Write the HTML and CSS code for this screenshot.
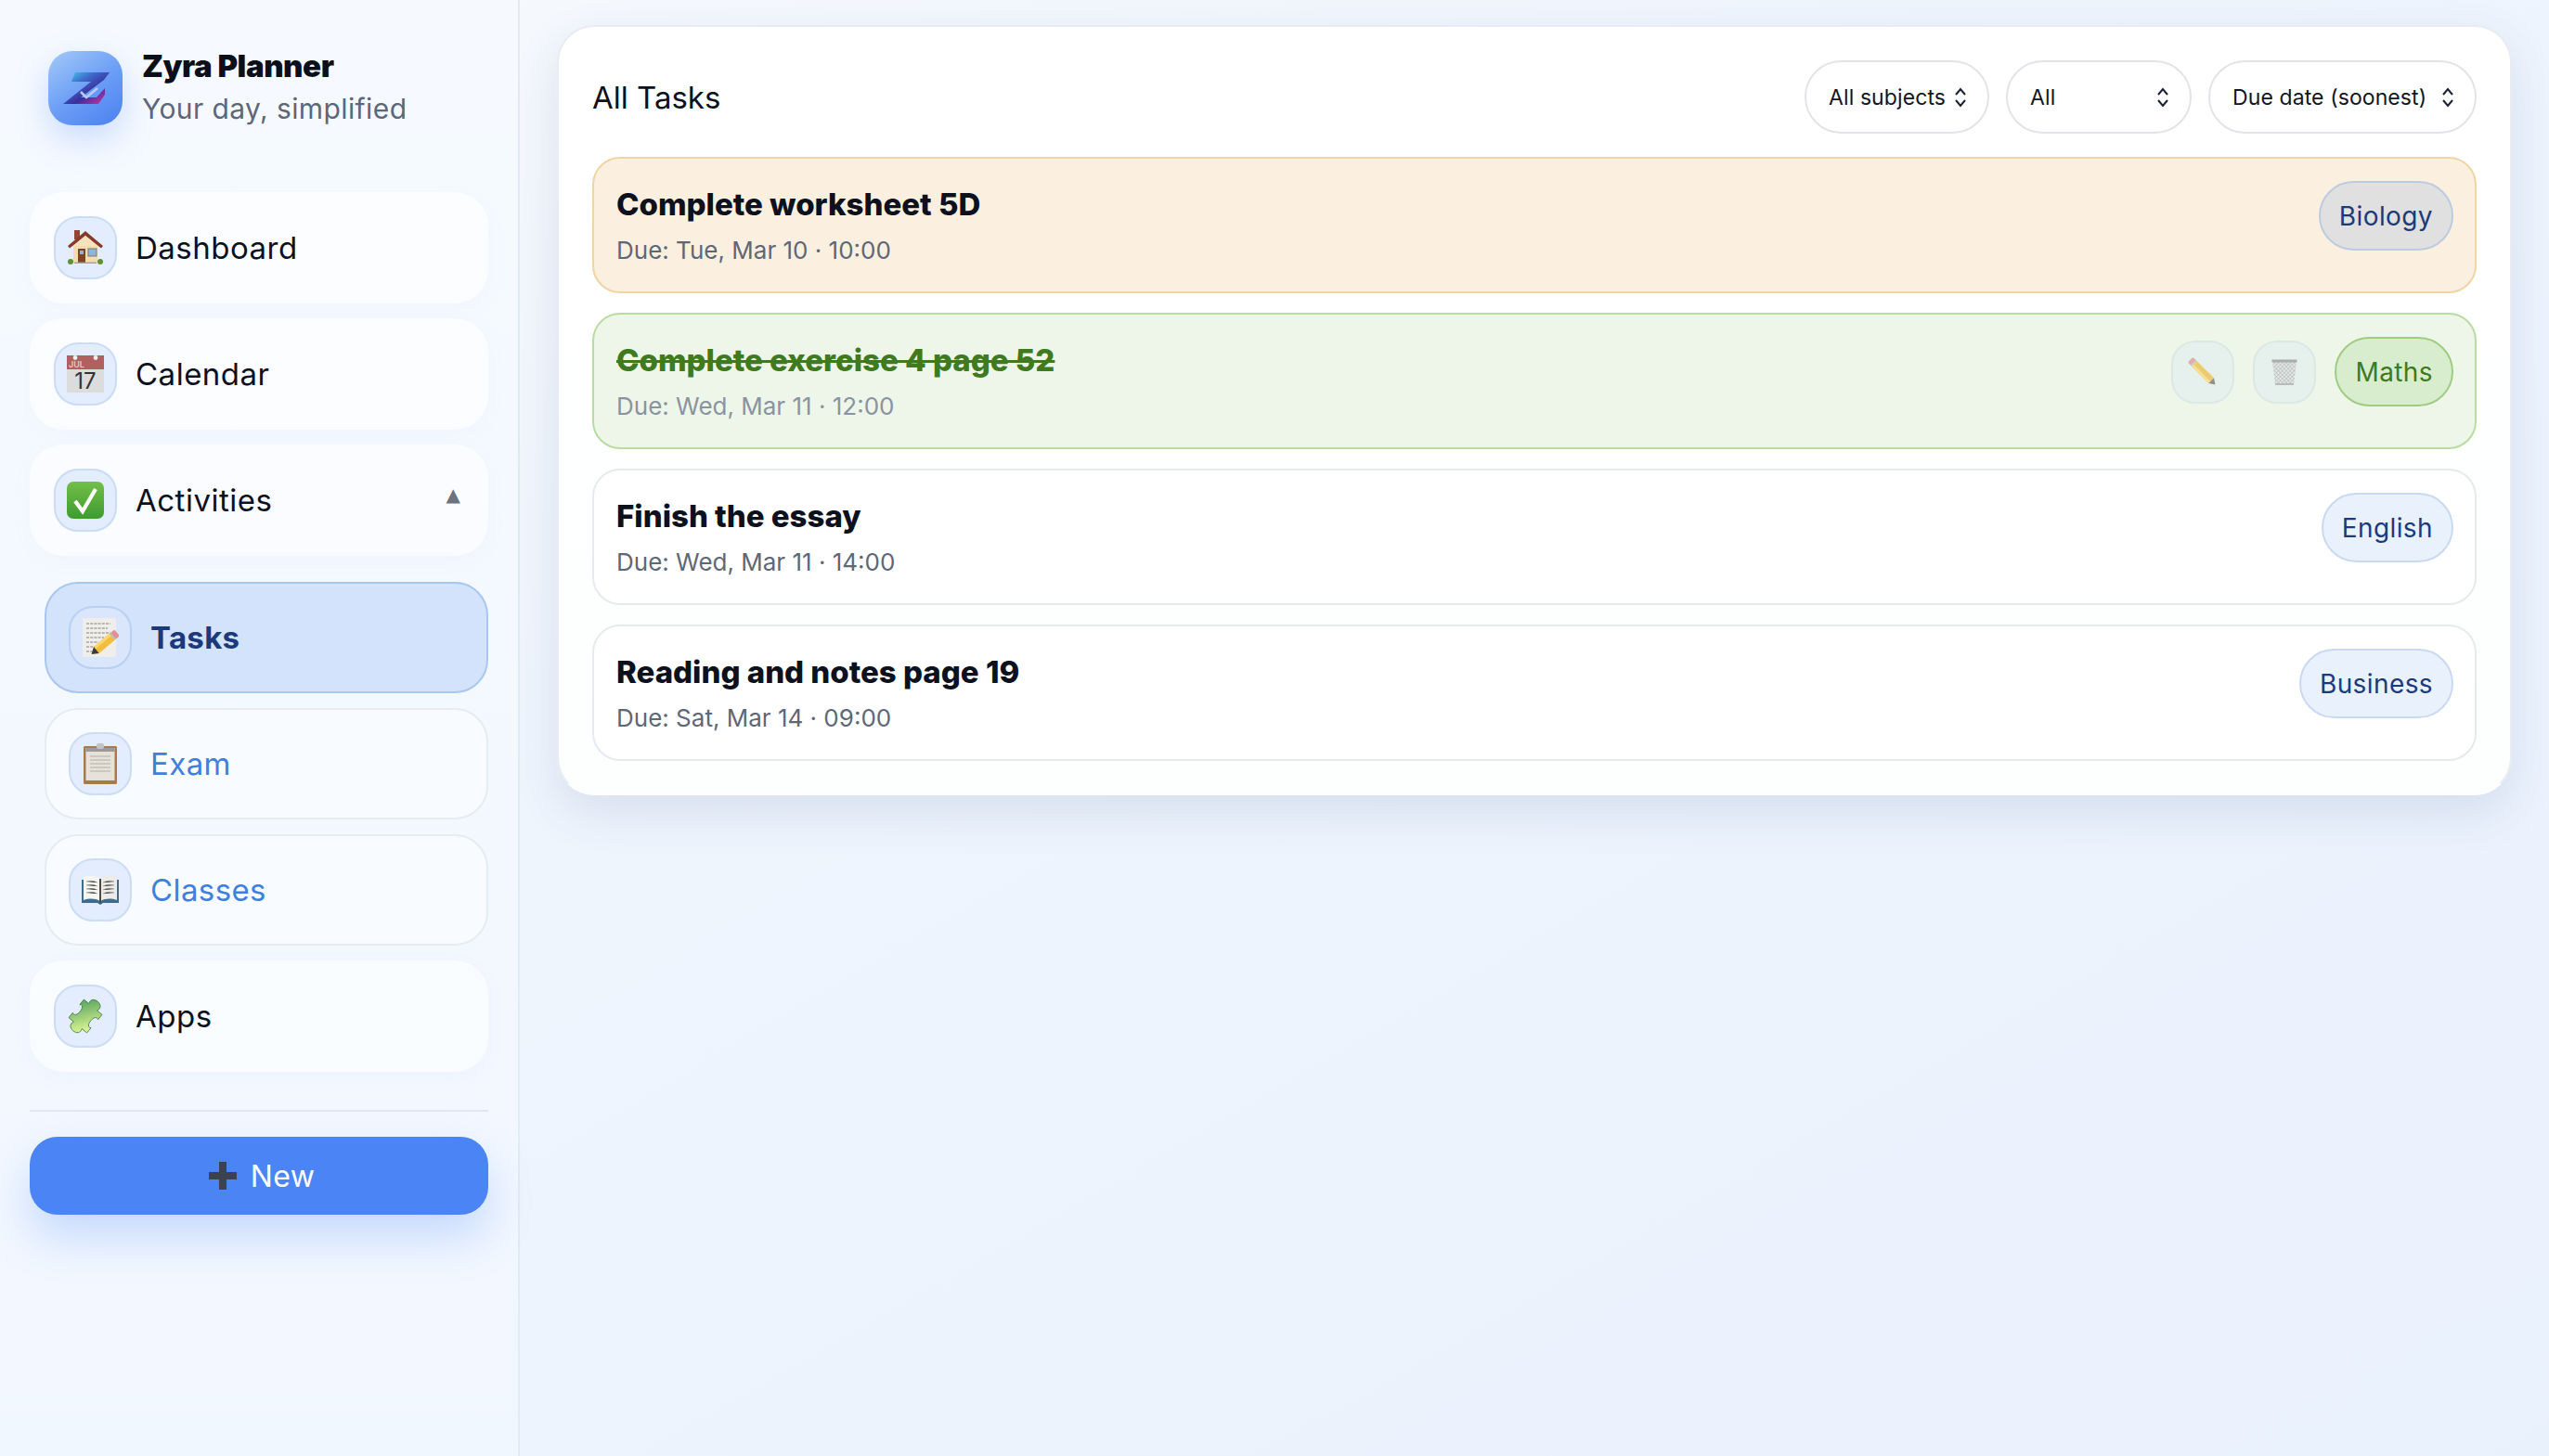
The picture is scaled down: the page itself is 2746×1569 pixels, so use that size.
FILE: index.html
```html
<!DOCTYPE html>
<html lang="en">
<head>
<meta charset="utf-8">
<title>Zyra Planner</title>
<link rel="stylesheet" href="styles.css">
</head>
<body>
<div class="app">
<aside class="sidebar">
  <div class="brand">
    <div class="logo">
      <svg viewBox="0 0 80 80" width="80" height="80">
        <defs>
          <linearGradient id="zg" x1="0.1" y1="0" x2="0.95" y2="0.9">
            <stop offset="0" stop-color="#3fd0ea"/><stop offset="0.3" stop-color="#3f6fd0"/><stop offset="0.65" stop-color="#3a2f9c"/><stop offset="1" stop-color="#c2359f"/>
          </linearGradient>
        </defs>
        <path d="M25 33 L29 23 H66 L60 31 L35 50 H52 L61 40 V47 L54 57 H16 L46 33 Z" fill="url(#zg)"/>
        <path d="M35 44 L41 50 L53 40" fill="none" stroke="#b9c9f6" stroke-width="2.6"/>
      </svg>
    </div>
    <div class="brand-text">
      <div class="brand-name">Zyra Planner</div>
      <div class="brand-sub">Your day, simplified</div>
    </div>
  </div>

  <nav class="nav">
    <a class="nav-item">
      <span class="nav-icon">
        <svg viewBox="0 0 40 40" width="40" height="40">
          <rect x="8" y="1" width="6" height="10" fill="#8f4638"/>
          <rect x="7" y="14" width="26" height="22" fill="#f4dcae"/>
          <path d="M20 2 L39 18 L37 20.500 L20 7 L3 20.500 L1 18 Z" fill="#8a3a2a"/>
          <path d="M20 7 L33 18 H7 Z" fill="#f7e3bb"/>
          <rect x="12" y="21" width="8" height="15" fill="#7b4526"/>
          <rect x="14" y="23" width="4" height="4" fill="#8fb6d6"/>
          <rect x="23" y="21" width="9" height="8" fill="#8fb6d6" stroke="#6f7c88"/>
          <rect x="8" y="35.5" width="24" height="1.5" fill="#a8a39a"/>
          <circle cx="4" cy="35" r="3" fill="#5d9133"/>
          <circle cx="36" cy="35" r="3" fill="#5d9133"/>
        </svg>
      </span>
      <span class="nav-label">Dashboard</span>
    </a>
    <a class="nav-item">
      <span class="nav-icon">
        <svg viewBox="0 0 40 40" width="40" height="40">
          <rect y="0" width="40" height="40" fill="#dcdcdc"/>
          <rect y="0" width="40" height="15" fill="#b25f5f"/>
          <circle cx="9" cy="2.5" r="2.4" fill="#f5f0f0"/>
          <circle cx="31" cy="2.5" r="2.4" fill="#f5f0f0"/>
          <text x="2" y="12.5" class="cal-month">JUL</text>
          <text x="20" y="36" text-anchor="middle" class="cal-day">17</text>
        </svg>
      </span>
      <span class="nav-label">Calendar</span>
    </a>
    <a class="nav-item">
      <span class="nav-icon">
        <svg viewBox="0 0 40 40" width="40" height="40">
          <defs>
            <linearGradient id="cg" x1="0" y1="0" x2="0" y2="1"><stop offset="0" stop-color="#72bf49"/><stop offset="1" stop-color="#3e9b2e"/></linearGradient>
          </defs>
          <rect width="40" height="40" rx="7" fill="url(#cg)"/>
          <path d="M9 21 L17 32 L31 8" fill="none" stroke="#fff" stroke-width="4.2"/>
        </svg>
      </span>
      <span class="nav-label">Activities</span>
      <span class="caret">▲</span>
    </a>

    <div class="subnav">
      <a class="sub-item active">
        <span class="nav-icon">
          <svg viewBox="0 0 40 42" width="40" height="42">
            <rect x="1" y="0" width="36" height="42" fill="#f0eeea"/>
            <g stroke="#67645f" stroke-width="0.8" stroke-dasharray="3 1.2">
              <path d="M5 6 H31 M5 11 H28 M5 16 H31 M5 21 H24 M5 26 H18 M5 31 H14 M5 36 H12"/>
            </g>
            <g transform="rotate(50 24 27)">
              <rect x="20" y="16" width="9" height="22" fill="#f2bc3d"/>
              <rect x="20" y="16" width="3" height="22" fill="#f9d86e"/>
              <rect x="20" y="13" width="9" height="3" fill="#b9b9b9"/>
              <rect x="20" y="9" width="9" height="5" rx="2" fill="#e58f8f"/>
              <path d="M20 38 H29 L24.500 45 Z" fill="#3c3a38"/>
            </g>
          </svg>
        </span>
        <span class="sub-label">Tasks</span>
      </a>
      <a class="sub-item">
        <span class="nav-icon">
          <svg viewBox="0 0 40 44" width="40" height="44">
            <rect x="2" y="3" width="36" height="41" rx="1.5" fill="#a87b4a"/>
            <rect x="4.5" y="5" width="31" height="35" fill="#e6e2da"/>
            <rect x="4.5" y="5" width="31" height="4" fill="#9a9a9a"/>
            <rect x="16" y="0" width="8" height="6" rx="2" fill="#c3c3c3"/>
            <g stroke="#c4c0b8" stroke-width="1.6"><path d="M9 14 H31 M9 18 H31 M9 22 H31 M9 26 H31 M9 30 H31"/></g>
          </svg>
        </span>
        <span class="sub-label">Exam</span>
      </a>
      <a class="sub-item">
        <span class="nav-icon">
          <svg viewBox="0 0 40 32" width="40" height="32">
            <path d="M0 5 H40 V30 H23 L20 32 L17 30 H0 Z" fill="#3f6c8c"/>
            <path d="M2 2 C8 0 15 0 19.5 4 V28 C15 25 8 25 2 27 Z" fill="#f5f5f2"/>
            <path d="M38 2 C32 0 25 0 20.5 4 V28 C25 25 32 25 38 27 Z" fill="#ecebe7"/>
            <g stroke="#9c9c98" stroke-width="0.8"><path d="M5 7 C9 6 13 6 17 8 M5 11 C9 10 13 10 17 12 M5 15 C9 14 13 14 17 16 M5 19 C9 18 13 18 17 20 M35 7 C31 6 27 6 23 8 M35 11 C31 10 27 10 23 12 M35 15 C31 14 27 14 23 16 M35 19 C31 18 27 18 23 20"/></g>
            <rect x="19" y="4" width="2" height="26" fill="#4d4a46"/>
          </svg>
        </span>
        <span class="sub-label">Classes</span>
      </a>
    </div>

    <a class="nav-item">
      <span class="nav-icon">
        <svg viewBox="0 0 40 40" width="40" height="40">
          <defs>
            <linearGradient id="pg" x1="0.18" y1="0.11" x2="0.82" y2="0.89"><stop offset="0" stop-color="#5fa862"/><stop offset="1" stop-color="#dcf692"/></linearGradient>
          </defs>
          <path transform="translate(20 20) rotate(40) scale(1.16)" d="M-11 -11 H-5 C-9 -20 9 -20 5 -11 H11 V-5 C5 -9 5 9 11 5 V11 H5 C9 20 -9 20 -5 11 H-11 V5 C-5 9 -5 -9 -11 -5 Z" fill="url(#pg)" stroke="#4a7a4a" stroke-width="0.7"/>
        </svg>
      </span>
      <span class="nav-label">Apps</span>
    </a>
  </nav>

  <hr class="divider">

  <button class="new-btn">
    <svg viewBox="0 0 30 30" width="30" height="30"><path d="M11 0 H19 V11 H30 V19 H19 V30 H11 V19 H0 V11 H11 Z" fill="#3c4250"/></svg>
    <span>New</span>
  </button>
</aside>

<main class="main">
  <section class="panel">
    <header class="panel-head">
      <h1 class="panel-title">All Tasks</h1>
      <div class="filters">
        <div class="select sel-subjects"><span>All subjects</span><svg class="chev" viewBox="0 0 14 24" width="14" height="24"><path d="M2 9 L7 3 L12 9 M2 15 L7 21 L12 15" fill="none" stroke="#1a2030" stroke-width="2"/></svg></div>
        <div class="select sel-all"><span>All</span><svg class="chev" viewBox="0 0 14 24" width="14" height="24"><path d="M2 9 L7 3 L12 9 M2 15 L7 21 L12 15" fill="none" stroke="#1a2030" stroke-width="2"/></svg></div>
        <div class="select sel-due"><span>Due date (soonest)</span><svg class="chev" viewBox="0 0 14 24" width="14" height="24"><path d="M2 9 L7 3 L12 9 M2 15 L7 21 L12 15" fill="none" stroke="#1a2030" stroke-width="2"/></svg></div>
      </div>
    </header>

    <div class="tasks">
      <article class="task task-soon">
        <div class="task-text">
          <div class="task-title">Complete worksheet 5D</div>
          <div class="task-due">Due: Tue, Mar 10 · 10:00</div>
        </div>
        <div class="task-side"><span class="pill pill-gray">Biology</span></div>
      </article>

      <article class="task task-done">
        <div class="task-text">
          <div class="task-title">Complete exercise 4 page 52</div>
          <div class="task-due">Due: Wed, Mar 11 · 12:00</div>
        </div>
        <div class="task-side">
          <span class="icon-btn">
            <svg viewBox="0 0 30 30" width="30" height="30">
              <g transform="rotate(-45 15 15)" opacity="0.72">
                <rect x="11" y="-4" width="8" height="5" rx="2" fill="#e58f8f"/>
                <rect x="11" y="0" width="8" height="2" fill="#bbb"/>
                <rect x="11" y="2" width="8" height="26" fill="#f2bc3d"/>
                <rect x="11" y="2" width="3" height="26" fill="#f9d86e"/>
                <path d="M11 28 H19 L15 34 Z" fill="#6d6a62"/>
              </g>
            </svg>
          </span>
          <span class="icon-btn">
            <svg viewBox="0 0 30 30" width="30" height="30">
              <defs>
                <pattern id="mesh" width="3" height="3" patternUnits="userSpaceOnUse" patternTransform="rotate(45)">
                  <rect width="3" height="3" fill="#e3e7e6"/>
                  <path d="M0 0 H3 M0 0 V3" stroke="#a0a5a4" stroke-width="0.8"/>
                </pattern>
              </defs>
              <path d="M2 3 H28 L25 29 H5 Z" fill="url(#mesh)"/>
              <rect x="1.5" y="1.5" width="27" height="3" fill="#a9adac"/>
              <rect x="5" y="27" width="20" height="2" fill="#b7bbba"/>
            </svg>
          </span>
          <span class="pill pill-green">Maths</span>
        </div>
      </article>

      <article class="task">
        <div class="task-text">
          <div class="task-title">Finish the essay</div>
          <div class="task-due">Due: Wed, Mar 11 · 14:00</div>
        </div>
        <div class="task-side"><span class="pill">English</span></div>
      </article>

      <article class="task">
        <div class="task-text">
          <div class="task-title">Reading and notes page 19</div>
          <div class="task-due">Due: Sat, Mar 14 · 09:00</div>
        </div>
        <div class="task-side"><span class="pill">Business</span></div>
      </article>
    </div>
  </section>
</main>
</div>
</body>
</html>
```
FILE: styles.css
```css
* { box-sizing: border-box; }
html, body { margin: 0; height: 100%; }
body {
  font-family: Inter, "Noto Sans", "Liberation Sans", sans-serif;
  color: #0c111d;
  background: linear-gradient(150deg, #f8fafd 0%, #eff5fd 35%, #e9f1fd 100%);
  overflow: hidden;
}
.app { display: grid; grid-template-columns: 560px 1fr; height: 1569px; }

/* Sidebar */
.sidebar {
  padding: 55px 32px 0;
  background: linear-gradient(180deg, #f6faff 0%, #f1f7ff 100%);
  border-right: 2px solid #e2eaf5;
}
.brand { display: flex; gap: 21px; align-items: flex-start; }
.logo {
  width: 80px; height: 80px; flex: none; border-radius: 26px;
  margin-left: 20px;
  background: linear-gradient(145deg, #a4caf9 0%, #6d9ff6 50%, #4a80f0 100%);
  box-shadow: 0 14px 36px rgba(74, 132, 245, 0.26);
}
.logo svg { display: block; }
.brand-text { margin-top: -2px; }
.brand-name { font-size: 33px; font-weight: 900; line-height: 36px; letter-spacing: -0.45px; color: #0b0f1a; }
.brand-sub { font-size: 30px; line-height: 36px; margin-top: 10px; color: #5d6779; letter-spacing: 0.4px; }

.nav { display: flex; flex-direction: column; gap: 16px; margin-top: 72px; }
.nav-item, .sub-item {
  display: flex; align-items: center; height: 120px; border-radius: 36px;
}
.nav-item { padding: 0 30px 0 26px; gap: 20px; background: rgba(255, 255, 255, 0.55); box-shadow: 0 6px 22px rgba(120, 160, 220, 0.04); }
.nav-icon {
  width: 68px; height: 68px; flex: none; display: flex; align-items: center; justify-content: center;
  background: #e3edfd; border: 2px solid #cbdcf7; border-radius: 26px;
}
.nav-icon svg { display: block; overflow: visible; }
.nav-label { font-size: 33px; letter-spacing: 0.5px; color: #0c111d; }
.cal-month { font: 600 9px Inter, sans-serif; fill: #e8c9c9; }
.cal-day { font: 400 24px/1 Inter, sans-serif; fill: #333; }
.caret { margin-left: auto; font: 20px "DejaVu Sans", sans-serif; color: #6c727e; margin-top: -13px; }

.subnav { display: flex; flex-direction: column; gap: 16px; margin: 12px 0 0 16px; }
.sub-item { padding: 0 24px; gap: 20px; border: 2px solid #e6ebf4; background: rgba(255, 255, 255, 0.45); }
.sub-item.active { background: #d3e3fb; border-color: #a9c6ef; }
.sub-item.active .nav-icon { background: #d9e6fb; border-color: #b8d0f3; }
.sub-label { font-size: 33px; color: #3f80dc; letter-spacing: 0.4px; }
.sub-item.active .sub-label { font-weight: 700; color: #1c3a7a; letter-spacing: 0.3px; }

.divider { border: 0; height: 2px; background: #dfe7f2; margin: 41px 0 27px; }
.new-btn {
  width: 100%; height: 84px; border: 0; border-radius: 30px; padding: 0 0 0 6px;
  background: #4a84f5; color: #fff; font: 400 32px Inter, sans-serif; letter-spacing: 0.3px;
  display: flex; align-items: center; justify-content: center; gap: 15px;
  box-shadow: 0 24px 48px rgba(74, 132, 245, 0.26);
}

/* Main */
.main { padding: 27px 40px 0 40px; }
.panel {
  background: linear-gradient(180deg, #ffffff, #fdfefe);
  border: 2px solid #e8ecf2; border-bottom-color: transparent;
  border-radius: 40px; padding: 36px 36px 35px;
  box-shadow: 0 18px 50px rgba(40, 70, 130, 0.12);
}
.panel-head { display: flex; align-items: center; justify-content: space-between; margin-bottom: 25px; }
.panel-title { margin: 0; font-size: 33px; font-weight: 400; color: #0c111d; letter-spacing: 0; }
.filters { display: flex; gap: 18px; }
.select {
  height: 79px; border: 2px solid #e2e4ea; border-radius: 40px; background: #fff;
  display: flex; align-items: center; justify-content: space-between; padding: 0 22px 0 24px;
  font-size: 23px; letter-spacing: 0.1px; color: #111622;
}
.sel-subjects { width: 199px; }
.sel-all { width: 200px; }
.sel-due { width: 289px; }

.tasks { display: flex; flex-direction: column; gap: 21px; }
.task {
  height: 147px; display: flex; justify-content: space-between; align-items: flex-start;
  border: 2px solid #e6e9ef; border-radius: 30px; padding: 24px 23px 0 24px; background: #fff;
}
.task-soon { background: #fbf0df; border-color: #f0d4a4; }
.task-done { background: #eef6ea; border-color: #b9dca0; }
.task-title { font-size: 33px; font-weight: 800; line-height: 40px; margin-top: 5px; letter-spacing: 0; color: #0c111d; }
.task-due { font-size: 26px; line-height: 34px; margin-top: 13px; color: #5f6777; }
.task-done .task-title { color: #3f7a1f; text-decoration: line-through; text-decoration-thickness: 3px; }
.task-done .task-due { color: #8a93a0; }
.task-side { display: flex; align-items: center; gap: 20px; }
.pill {
  height: 75px; display: flex; align-items: center; padding: 0 20px;
  border: 2px solid #c9d9f1; border-radius: 38px; background: #e9f1fc;
  font-size: 28px; letter-spacing: 0.4px; color: #1c3a7a;
}
.pill-gray { background: #e0e0e0; border-color: #bdcbe0; }
.pill-green { background: #d8edcd; border-color: #a0cc82; color: #3f7a1f; }
.icon-btn {
  width: 68px; height: 68px; display: flex; align-items: center; justify-content: center;
  background: #e6f1ee; border: 2px solid #dbe8e4; border-radius: 26px;
}
.icon-btn svg { display: block; overflow: visible; }
```
